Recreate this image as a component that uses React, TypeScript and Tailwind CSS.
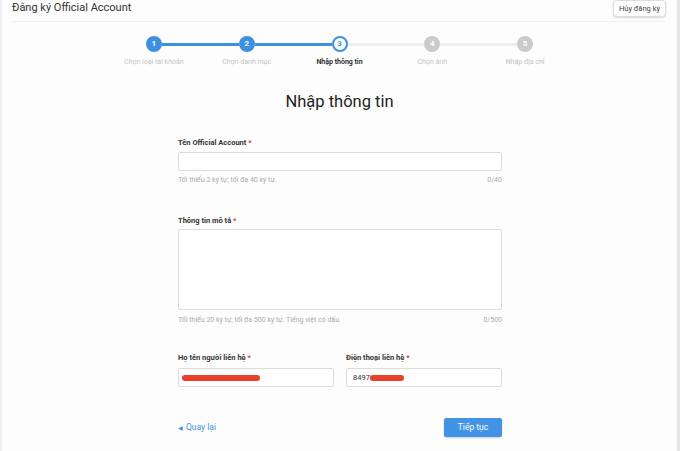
const steps = [
  { n: 1, label: "Chọn loại tài khoản", state: "done" },
  { n: 2, label: "Chọn danh mục", state: "done" },
  { n: 3, label: "Nhập thông tin", state: "active" },
  { n: 4, label: "Chọn ảnh", state: "todo" },
  { n: 5, label: "Nhập địa chỉ", state: "todo" },
];

function Stepper() {
  return (
    <div className="mx-auto mt-[14px] grid w-[464px] grid-cols-5">
      {steps.map((s, i) => {
        const leftBlue = i <= 2;
        const rightBlue = i < 2;
        return (
          <div key={s.n} className="flex flex-col items-center">
            <div className="flex w-full items-center">
              <div
                className={`h-[3px] flex-1 ${
                  i === 0 ? "bg-transparent" : leftBlue ? "bg-[#3d8fe0]" : "bg-[#eeeeee]"
                }`}
              />
              {s.state === "done" && (
                <div className="flex h-4 w-4 items-center justify-center rounded-full bg-[#3d8fe0] text-[8px] font-bold text-white">
                  {s.n}
                </div>
              )}
              {s.state === "active" && (
                <div className="flex h-4 w-4 items-center justify-center rounded-full border-2 border-[#3d8fe0] bg-white text-[8px] font-bold text-[#3d8fe0]">
                  {s.n}
                </div>
              )}
              {s.state === "todo" && (
                <div className="flex h-4 w-4 items-center justify-center rounded-full bg-[#cbcbcb] text-[8px] font-bold text-white">
                  {s.n}
                </div>
              )}
              <div
                className={`h-[3px] flex-1 ${
                  i === 4 ? "bg-transparent" : rightBlue ? "bg-[#3d8fe0]" : "bg-[#eeeeee]"
                }`}
              />
            </div>
            <div
              className={`mt-[5px] text-[7px] leading-[10px] ${
                s.state === "active" ? "font-semibold text-[#222]" : "text-[#c2c2c2]"
              }`}
            >
              {s.label}
            </div>
          </div>
        );
      })}
    </div>
  );
}

function Label({ text }: { text: string }) {
  return (
    <div className="text-[7.5px] font-bold leading-[10px] text-[#333]">
      {text} <span className="text-[#e8402a]">*</span>
    </div>
  );
}

export default function App() {
  return (
    <div
      className="relative h-[451px] w-[680px] overflow-hidden border-l-2 border-[#edf1f5] bg-[#fdfdfd] text-[#333]"
      style={{ fontFamily: "Roboto, 'Noto Sans', sans-serif" }}
    >
      <div className="mr-[3px]">
        <div className="ml-[10px] mr-[11px] flex h-[22px] items-start justify-between border-b border-[#eeeeee]">
          <div className="pt-[1px] text-[11px] leading-[14px] text-[#333]">Đăng ký Official Account</div>
          <button className="h-[17px] rounded-sm border border-[#dddddd] bg-white px-[5px] text-[7.5px] text-[#444] shadow-[0_1px_2px_rgba(0,0,0,0.15)]">
            Hủy đăng ký
          </button>
        </div>

        <Stepper />

        <h1 className="mt-[23px] text-center text-[16.5px] leading-6 text-[#222]">Nhập thông tin</h1>

        <div className="mx-auto w-[325px] pl-[1px]">
          <div className="mt-[24px]">
            <Label text="Tên Official Account" />
          </div>
          <div className="mt-[4px] h-[19px] rounded-[2px] border border-[#dcdcdc] bg-white" />
          <div className="mt-[4px] flex justify-between text-[7px] leading-[10px] text-[#aaa]">
            <span>Tối thiểu 2 ký tự; tối đa 40 ký tự.</span>
            <span>0/40</span>
          </div>

          <div className="mt-[31px]">
            <Label text="Thông tin mô tả" />
          </div>
          <div className="mt-[3px] h-[81px] rounded-[2px] border border-[#dcdcdc] bg-white" />
          <div className="mt-[5px] flex justify-between text-[7px] leading-[10px] text-[#aaa]">
            <span>Tối thiểu 20 ký tự; tối đa 500 ký tự. Tiếng việt có dấu.</span>
            <span>0/500</span>
          </div>

          <div className="mt-[28px] grid grid-cols-2 gap-x-[12px]">
            <Label text="Họ tên người liên hệ" />
            <Label text="Điện thoại liên hệ" />
            <div className="mt-[5px] flex h-[19px] items-center rounded-[2px] border border-[#dcdcdc] bg-white pl-[3px]">
              <div className="h-[6px] w-[78px] rounded-full bg-[#e8402a]" />
            </div>
            <div className="mt-[5px] flex h-[19px] items-center rounded-[2px] border border-[#dcdcdc] bg-white pl-[6px]">
              <span className="text-[7.5px] text-[#333]">8497</span>
              <div className="h-[6px] w-[34px] rounded-full bg-[#e8402a]" />
            </div>
          </div>

          <div className="mt-[31px] flex items-center justify-between">
            <div className="flex items-center gap-[3px] text-[8.5px] text-[#3d8fe0]">
              <span className="text-[6px]">◀</span>
              <span>Quay lại</span>
            </div>
            <button className="h-[19px] w-[58px] rounded-[2px] bg-[#4293e4] text-[8.5px] text-white shadow-[0_1px_2px_rgba(0,0,0,0.2)]">
              Tiếp tục
            </button>
          </div>
        </div>
      </div>
      <div className="absolute right-0 top-0 h-full w-[3px] bg-[#e3e6ea]" />
    </div>
  );
}
